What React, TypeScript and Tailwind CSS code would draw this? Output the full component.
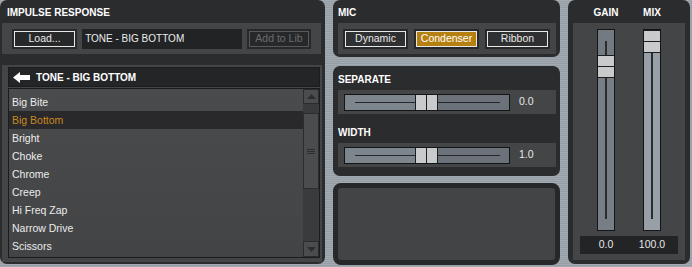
import type { FC } from "react";

const presets = [
  "Big Bite",
  "Big Bottom",
  "Bright",
  "Choke",
  "Chrome",
  "Creep",
  "Hi Freq Zap",
  "Narrow Drive",
  "Scissors",
];

// thumb for horizontal sliders
const HThumb: FC = () => (
  <div className="relative z-10 flex border-x border-[#1c1d1e]">
    <div className="w-[10px] bg-[#c9cacb]" />
    <div className="w-px bg-[#1c1d1e]" />
    <div className="w-[10px] bg-[#c9cacb]" />
  </div>
);

// thumb for vertical faders
const VThumb: FC = () => (
  <div className="relative z-10 flex flex-col border-y border-[#1c1d1e]">
    <div className="h-[10px] bg-[#c9cacb]" />
    <div className="h-px bg-[#1c1d1e]" />
    <div className="h-[10px] bg-[#c9cacb]" />
  </div>
);

const HSlider: FC<{ value: string }> = ({ value }) => (
  <div className="mr-[4px] flex h-[24px] items-center bg-[#434547] pl-[6px]">
    <div className="relative flex h-[17px] w-[166px] border border-[#131415]">
      <div className="w-[70px] bg-[#7e868d]" />
      <div className="absolute left-[10px] right-[9px] top-[7px] h-px bg-[#25272a]" />
      <HThumb />
      <div className="flex-1 bg-[#6b7279]" />
    </div>
    <span className="ml-[9px] text-[10.5px] text-[#e8e8e8]">{value}</span>
  </div>
);

const MicButton: FC<{ label: string; active?: boolean }> = ({ label, active }) => (
  <div className="h-[20px] w-[65px] bg-[#27282a] p-[2px]">
    <div
      className={[
        "flex h-full items-center justify-center border border-[#e8e8e8] text-[10.5px] leading-none",
        active ? "bg-[#b5800f] text-white" : "bg-[#2f3032] text-[#e8e8e8]",
      ].join(" ")}
    >
      {label}
    </div>
  </div>
);

const App: FC = () => {
  return (
    <div className="flex h-[267px] w-[692px] overflow-hidden bg-[repeating-linear-gradient(180deg,#a2aab2_0px,#a2aab2_1px,#959da5_1px,#959da5_2px)] font-['Liberation_Sans',Arial,sans-serif]">
      {/* IMPULSE RESPONSE */}
      <section className="flex h-[264px] w-[325px] flex-col rounded-[7px] bg-[#2b2c2e]">
        <h2 className="h-[23px] pl-[7px] pt-[7px] text-[10px] font-bold leading-[12px] text-white">
          IMPULSE RESPONSE
        </h2>
        <div className="ml-[2px] mr-[4px] flex h-[31px] items-center gap-[5px] bg-[#434547] px-[10px]">
          <div className="h-[20px] w-[66px] bg-[#27282a] p-[2px]">
            <div className="flex h-full items-center justify-center border border-[#e8e8e8] text-[10.5px] leading-none text-[#e8e8e8]">
              Load...
            </div>
          </div>
          <div className="flex h-[20px] w-[162px] items-center bg-[#222325] pl-[3px] text-[10px] text-[#ececec]">
            TONE - BIG BOTTOM
          </div>
          <div className="h-[20px] w-[65px] bg-[#27282a] p-[2px]">
            <div className="flex h-full items-center justify-center border border-[#58595b] text-[10.5px] leading-none text-[#6b6c6e]">
              Add to Lib
            </div>
          </div>
        </div>

        <div className="ml-[2px] mr-[3px] mt-[11px] flex flex-col bg-[#434547] pb-[4px] pl-[6px] pr-[2px] pt-[2px]">
          <div className="flex h-[20px] items-center border border-[#1b1c1d] bg-[#242527] pl-[4px]">
            <svg width="17" height="11" viewBox="0 0 17 11" className="text-white">
              <polygon points="0,5.5 7,0 7,3 17,3 17,8 7,8 7,11" fill="currentColor" />
            </svg>
            <span className="ml-[6px] text-[10px] font-bold text-white">TONE - BIG BOTTOM</span>
          </div>
          <div className="mt-px flex h-[170px] border border-[#1b1c1d] bg-[linear-gradient(180deg,#4a4b4d,#434446)]">
            <ul className="flex-1 pt-[4px]">
              {presets.map((p) => {
                const sel = p === "Big Bottom";
                return (
                  <li
                    key={p}
                    className={[
                      "h-[18px] pl-[3px] text-[10.5px] leading-[18px]",
                      sel ? "bg-[#29292b] text-[#c8881c]" : "text-[#ececec]",
                    ].join(" ")}
                  >
                    {p}
                  </li>
                );
              })}
            </ul>
            {/* scrollbar */}
            <div className="flex w-[16px] flex-col bg-[#3a3b3d]">
              <div className="flex h-[15px] items-center justify-center border border-[#2b2c2e] bg-[#4b4c4e]">
                <svg width="9" height="5" viewBox="0 0 9 5">
                  <polygon points="0,5 4.5,0 9,5" fill="#2c2d2f" />
                </svg>
              </div>
              <div className="mt-[9px] flex h-[76px] flex-col items-center justify-center gap-[1px] border border-[#2b2c2e] bg-[#4b4c4e]">
                <div className="h-px w-[8px] bg-[#2c2d2f]" />
                <div className="h-px w-[8px] bg-[#2c2d2f]" />
                <div className="h-px w-[8px] bg-[#2c2d2f]" />
              </div>
              <div className="flex-1" />
              <div className="flex h-[16px] items-center justify-center border border-[#2b2c2e] bg-[#4b4c4e]">
                <svg width="9" height="5" viewBox="0 0 9 5">
                  <polygon points="0,0 9,0 4.5,5" fill="#2c2d2f" />
                </svg>
              </div>
            </div>
          </div>
        </div>
      </section>

      {/* middle column */}
      <div className="ml-[8px] flex w-[227px] flex-col">
        <section className="flex h-[57px] flex-col rounded-[7px] bg-[#2b2c2e]">
          <h2 className="h-[23px] pl-[5px] pt-[7px] text-[10px] font-bold leading-[12px] text-white">MIC</h2>
          <div className="ml-[5px] mr-[4px] flex h-[31px] items-center gap-[6px] bg-[#434547] px-[5px]">
            <MicButton label="Dynamic" />
            <MicButton label="Condenser" active />
            <MicButton label="Ribbon" />
          </div>
        </section>

        <section className="mt-[9px] flex h-[110px] flex-col rounded-[7px] bg-[#2b2c2e] pl-[5px]">
          <h2 className="h-[24px] pt-[8px] text-[10px] font-bold leading-[12px] text-white">SEPARATE</h2>
          <HSlider value="0.0" />
          <h2 className="h-[29px] pt-[13px] text-[10px] font-bold leading-[12px] text-white">WIDTH</h2>
          <HSlider value="1.0" />
        </section>

        <section className="mt-[7px] h-[82px] rounded-[8px] border-[5px] border-[#27282a] bg-[#434446]" />
      </div>

      {/* GAIN / MIX */}
      <section className="ml-[8px] flex h-[264px] w-[122px] flex-col rounded-[7px] bg-[#2b2c2e]">
        <div className="flex h-[23px] pl-[15px] pt-[7px] text-[10px] font-bold leading-[12px] text-white">
          <span className="w-[46px] text-center">GAIN</span>
          <span className="w-[46px] text-center">MIX</span>
        </div>
        <div className="mx-[5px] flex flex-1 flex-col bg-[#434547] pt-[6px]">
          <div className="flex pl-[10px]">
            <div className="flex w-[46px] justify-center">
              <div className="relative flex h-[202px] w-[18px] flex-col border border-[#141516]">
                <div className="h-[25px] bg-[#737a81]" />
                <div className="absolute bottom-[11px] left-[7px] top-[11px] w-[2px] bg-[#2b2c2e]" />
                <VThumb />
                <div className="flex-1 bg-[#777e85]" />
              </div>
            </div>
            <div className="flex w-[46px] justify-center">
              <div className="relative flex h-[202px] w-[18px] flex-col border border-[#141516]">
                <div className="absolute bottom-[11px] left-[7px] top-[11px] w-[2px] bg-[#2b2c2e]" />
                <VThumb />
                <div className="flex-1 bg-[#989fa6]" />
              </div>
            </div>
          </div>
          <div className="ml-[7px] mt-[5px] flex h-[18px] w-[98px] items-center bg-[#232426] pl-[3px] text-[10.5px] text-[#e8e8e8]">
            <span className="w-[46px] text-center">0.0</span>
            <span className="w-[46px] text-center">100.0</span>
          </div>
        </div>
        <div className="h-[4px]" />
      </section>
    </div>
  );
};

export default App;
